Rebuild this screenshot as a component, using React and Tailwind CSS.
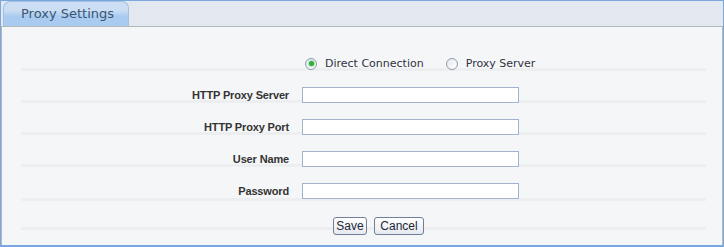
import { useState } from 'react'

const fields = [
  { label: 'HTTP Proxy Server', h: 'h-[32px]', mb: '-mb-[3px]' },
  { label: 'HTTP Proxy Port', h: 'h-[32px]', mb: '-mb-[3px]' },
  { label: 'User Name', h: 'h-[32px]', mb: '-mb-[3px]' },
  { label: 'Password', h: 'h-[34px]', mb: '-mb-[1px]', type: 'password' },
]

function Radio({ checked, label, onClick }) {
  return (
    <div className="flex items-center gap-[8px] cursor-pointer" onClick={onClick}>
      <span className="w-[12px] h-[12px] rounded-full border border-[#8d9aab] bg-gradient-to-br from-[#e4e8ee] to-white flex items-center justify-center">
        {checked && <span className="w-[5px] h-[5px] rounded-full bg-[#2fae3a] shadow-[0_0_0_1px_#b6e2b9]" />}
      </span>
      <span>{label}</span>
    </div>
  )
}

export default function App() {
  const [mode, setMode] = useState('direct')

  return (
    <div className="w-[724px] h-[247px] border border-b-2 border-[#7ba7df] bg-[#e3e8f0] flex flex-col font-['DejaVu_Sans',Verdana,sans-serif] text-[11px] text-[#2f3340]">
      <div className="h-[25px] flex items-end pl-[2px]">
        <div className="w-[126px] h-[25px] rounded-t-[7px] border border-b-0 border-[#a3c0e3] bg-gradient-to-b from-[#cbdef3] from-35% to-[#a9cbf0] to-60% pl-[17px] text-[13px] leading-[24px] text-[#3a5673]">
          Proxy Settings
        </div>
      </div>

      <div className="flex-1 bg-[#f5f6f8] border border-b-0 border-[#b3b8bd] flex flex-col">
        <div className="h-[44px] ml-[19px] mr-[16px] border-b-[3px] border-[#eceef0] flex items-end">
          <div className="ml-[284px] -mb-[2px] flex items-center gap-[22px] leading-[13px]">
            <Radio checked={mode === 'direct'} label="Direct Connection" onClick={() => setMode('direct')} />
            <Radio checked={mode === 'proxy'} label="Proxy Server" onClick={() => setMode('proxy')} />
          </div>
        </div>

        {fields.map((f) => (
          <div key={f.label} className={`${f.h} ml-[19px] mr-[16px] border-b-[3px] border-[#eceef0] flex items-end`}>
            <label className={`w-[268px] h-[16px] leading-[16px] text-right font-['Liberation_Sans',Arial,sans-serif] font-bold text-[11px] tracking-[-0.15px] text-[#333] ${f.mb}`}>
              {f.label}
            </label>
            <input
              type={f.type || 'text'}
              className={`ml-[13px] w-[217px] h-[16px] border border-[#a2b4cb] bg-white outline-none px-1 text-[11px] ${f.mb}`}
            />
          </div>
        ))}

        <div className="h-[29px] ml-[19px] mr-[16px] border-b-[3px] border-[#eceef0] flex items-end">
          <div className="ml-[312px] flex gap-[7px] -mb-[8px] font-['Liberation_Sans',Arial,sans-serif] text-[12px] text-[#1d2738]">
            <button className="w-[34px] h-[18px] rounded-[3px] border border-[#6f7f99] bg-gradient-to-b from-white to-[#e6e9ee] leading-[16px]">Save</button>
            <button className="w-[50px] h-[18px] rounded-[3px] border border-[#6f7f99] bg-gradient-to-b from-white to-[#e6e9ee] leading-[16px]">Cancel</button>
          </div>
        </div>
      </div>
    </div>
  )
}
